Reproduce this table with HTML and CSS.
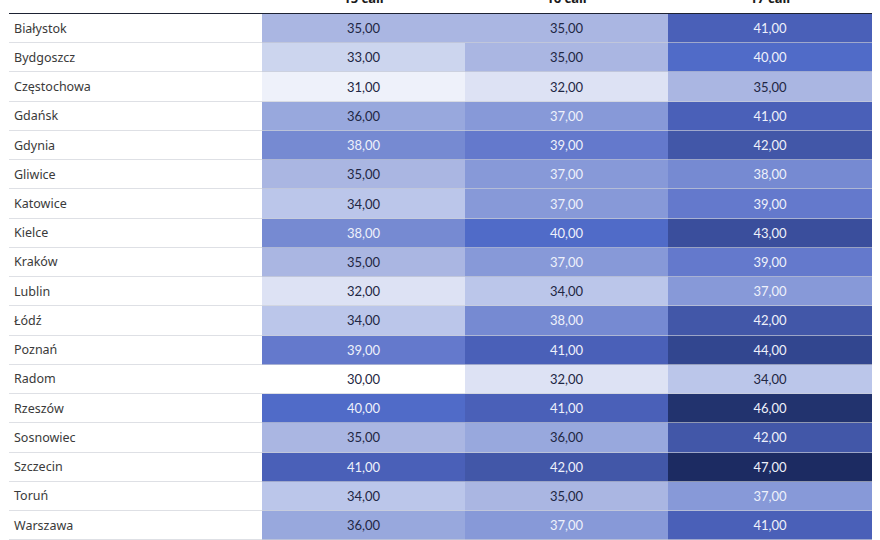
FILE: index.html
```html
<!DOCTYPE html>
<html lang="pl">
<head>
<meta charset="utf-8">
<title>Ceny</title>
<link rel="stylesheet" href="styles.css">
</head>
<body>
<div class="table">
  <div class="row head">
    <div class="cell city"></div>
    <div class="cell hnum">15 cali</div>
    <div class="cell hnum">16 cali</div>
    <div class="cell hnum">17 cali</div>
  </div>
  <div class="row"><div class="cell city">Białystok</div><div class="cell num v35">35,00</div><div class="cell num v35">35,00</div><div class="cell num v41">41,00</div></div>
  <div class="row"><div class="cell city">Bydgoszcz</div><div class="cell num v33">33,00</div><div class="cell num v35">35,00</div><div class="cell num v40">40,00</div></div>
  <div class="row"><div class="cell city">Częstochowa</div><div class="cell num v31">31,00</div><div class="cell num v32">32,00</div><div class="cell num v35">35,00</div></div>
  <div class="row"><div class="cell city">Gdańsk</div><div class="cell num v36">36,00</div><div class="cell num v37">37,00</div><div class="cell num v41">41,00</div></div>
  <div class="row"><div class="cell city">Gdynia</div><div class="cell num v38">38,00</div><div class="cell num v39">39,00</div><div class="cell num v42">42,00</div></div>
  <div class="row"><div class="cell city">Gliwice</div><div class="cell num v35">35,00</div><div class="cell num v37">37,00</div><div class="cell num v38">38,00</div></div>
  <div class="row"><div class="cell city">Katowice</div><div class="cell num v34">34,00</div><div class="cell num v37">37,00</div><div class="cell num v39">39,00</div></div>
  <div class="row"><div class="cell city">Kielce</div><div class="cell num v38">38,00</div><div class="cell num v40">40,00</div><div class="cell num v43">43,00</div></div>
  <div class="row"><div class="cell city">Kraków</div><div class="cell num v35">35,00</div><div class="cell num v37">37,00</div><div class="cell num v39">39,00</div></div>
  <div class="row"><div class="cell city">Lublin</div><div class="cell num v32">32,00</div><div class="cell num v34">34,00</div><div class="cell num v37">37,00</div></div>
  <div class="row"><div class="cell city">Łódź</div><div class="cell num v34">34,00</div><div class="cell num v38">38,00</div><div class="cell num v42">42,00</div></div>
  <div class="row"><div class="cell city">Poznań</div><div class="cell num v39">39,00</div><div class="cell num v41">41,00</div><div class="cell num v44">44,00</div></div>
  <div class="row"><div class="cell city">Radom</div><div class="cell num v30">30,00</div><div class="cell num v32">32,00</div><div class="cell num v34">34,00</div></div>
  <div class="row"><div class="cell city">Rzeszów</div><div class="cell num v40">40,00</div><div class="cell num v41">41,00</div><div class="cell num v46">46,00</div></div>
  <div class="row"><div class="cell city">Sosnowiec</div><div class="cell num v35">35,00</div><div class="cell num v36">36,00</div><div class="cell num v42">42,00</div></div>
  <div class="row"><div class="cell city">Szczecin</div><div class="cell num v41">41,00</div><div class="cell num v42">42,00</div><div class="cell num v47">47,00</div></div>
  <div class="row"><div class="cell city">Toruń</div><div class="cell num v34">34,00</div><div class="cell num v35">35,00</div><div class="cell num v37">37,00</div></div>
  <div class="row"><div class="cell city">Warszawa</div><div class="cell num v36">36,00</div><div class="cell num v37">37,00</div><div class="cell num v41">41,00</div></div>
</div>
</body>
</html>
```
FILE: styles.css
```css
html, body {
  margin: 0;
  padding: 0;
  background: #ffffff;
}
body {
  overflow: hidden;
}
.table {
  margin: -10px 0 0 9px;
  width: 863px;
  display: flex;
  flex-direction: column;
}
.row {
  display: grid;
  grid-template-columns: 253px 203px 203px 204px;
  height: 29.24px;
  box-sizing: border-box;
}
.row.head {
  height: 24px;
  border-bottom: 1px solid #1d2233;
}
.cell {
  display: flex;
  align-items: center;
  box-sizing: border-box;
  border-bottom: 1px solid rgba(205, 208, 215, 0.65);
}
.head .cell {
  border-bottom: none;
  align-items: flex-start;
}
.hnum {
  justify-content: center;
  font-family: "Noto Sans", sans-serif;
  font-weight: 700;
  font-size: 13px;
  line-height: 16px;
  color: #1b1b1b;
}
.city {
  padding-left: 5px;
  font-family: "Noto Sans", sans-serif;
  font-size: 12.5px;
  color: #3a3a3a;
}
.num {
  justify-content: center;
  font-family: Lato, sans-serif;
  font-size: 13px;
  color: #1f2744;
}
.v30 { background: #ffffff; }
.v31 { background: #eef1fa; }
.v32 { background: #dde2f4; }
.v33 { background: #ccd5ee; }
.v34 { background: #bbc6ea; }
.v35 { background: #aab6e2; }
.v36 { background: #98a8dd; }
.v37 { background: #8799d8; color: #eef1fb; }
.v38 { background: #768ad2; color: #eef1fb; }
.v39 { background: #6479cc; color: #eef1fb; }
.v40 { background: #506bc8; color: #eef1fb; }
.v41 { background: #4a60b8; color: #eef1fb; }
.v42 { background: #4257a8; color: #eef1fb; }
.v43 { background: #3a4e9c; color: #eef1fb; }
.v44 { background: #32468f; color: #eef1fb; }
.v46 { background: #22336e; color: #eef1fb; }
.v47 { background: #1c2b62; color: #eef1fb; }
```
